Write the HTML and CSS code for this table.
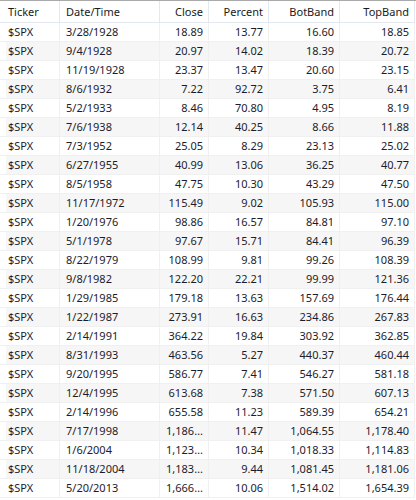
FILE: index.html
```html
<!DOCTYPE html>
<html>
<head>
<meta charset="utf-8">
<link rel="stylesheet" href="styles.css">
</head>
<body>
<div class="grid">
  <div class="row head">
    <div class="c l first">Ticker</div>
    <div class="c l">Date/Time</div>
    <div class="c r">Close</div>
    <div class="c r">Percent</div>
    <div class="c r">BotBand</div>
    <div class="c r">TopBand</div>
  </div>
  <div class="row"><div class="c l first">$SPX</div><div class="c l">3/28/1928</div><div class="c r">18.89</div><div class="c r">13.77</div><div class="c r">16.60</div><div class="c r">18.85</div></div>
  <div class="row alt"><div class="c l first">$SPX</div><div class="c l">9/4/1928</div><div class="c r">20.97</div><div class="c r">14.02</div><div class="c r">18.39</div><div class="c r">20.72</div></div>
  <div class="row"><div class="c l first">$SPX</div><div class="c l">11/19/1928</div><div class="c r">23.37</div><div class="c r">13.47</div><div class="c r">20.60</div><div class="c r">23.15</div></div>
  <div class="row alt"><div class="c l first">$SPX</div><div class="c l">8/6/1932</div><div class="c r">7.22</div><div class="c r">92.72</div><div class="c r">3.75</div><div class="c r">6.41</div></div>
  <div class="row"><div class="c l first">$SPX</div><div class="c l">5/2/1933</div><div class="c r">8.46</div><div class="c r">70.80</div><div class="c r">4.95</div><div class="c r">8.19</div></div>
  <div class="row alt"><div class="c l first">$SPX</div><div class="c l">7/6/1938</div><div class="c r">12.14</div><div class="c r">40.25</div><div class="c r">8.66</div><div class="c r">11.88</div></div>
  <div class="row"><div class="c l first">$SPX</div><div class="c l">7/3/1952</div><div class="c r">25.05</div><div class="c r">8.29</div><div class="c r">23.13</div><div class="c r">25.02</div></div>
  <div class="row alt"><div class="c l first">$SPX</div><div class="c l">6/27/1955</div><div class="c r">40.99</div><div class="c r">13.06</div><div class="c r">36.25</div><div class="c r">40.77</div></div>
  <div class="row"><div class="c l first">$SPX</div><div class="c l">8/5/1958</div><div class="c r">47.75</div><div class="c r">10.30</div><div class="c r">43.29</div><div class="c r">47.50</div></div>
  <div class="row alt"><div class="c l first">$SPX</div><div class="c l">11/17/1972</div><div class="c r">115.49</div><div class="c r">9.02</div><div class="c r">105.93</div><div class="c r">115.00</div></div>
  <div class="row"><div class="c l first">$SPX</div><div class="c l">1/20/1976</div><div class="c r">98.86</div><div class="c r">16.57</div><div class="c r">84.81</div><div class="c r">97.10</div></div>
  <div class="row alt"><div class="c l first">$SPX</div><div class="c l">5/1/1978</div><div class="c r">97.67</div><div class="c r">15.71</div><div class="c r">84.41</div><div class="c r">96.39</div></div>
  <div class="row"><div class="c l first">$SPX</div><div class="c l">8/22/1979</div><div class="c r">108.99</div><div class="c r">9.81</div><div class="c r">99.26</div><div class="c r">108.39</div></div>
  <div class="row alt"><div class="c l first">$SPX</div><div class="c l">9/8/1982</div><div class="c r">122.20</div><div class="c r">22.21</div><div class="c r">99.99</div><div class="c r">121.36</div></div>
  <div class="row"><div class="c l first">$SPX</div><div class="c l">1/29/1985</div><div class="c r">179.18</div><div class="c r">13.63</div><div class="c r">157.69</div><div class="c r">176.44</div></div>
  <div class="row alt"><div class="c l first">$SPX</div><div class="c l">1/22/1987</div><div class="c r">273.91</div><div class="c r">16.63</div><div class="c r">234.86</div><div class="c r">267.83</div></div>
  <div class="row"><div class="c l first">$SPX</div><div class="c l">2/14/1991</div><div class="c r">364.22</div><div class="c r">19.84</div><div class="c r">303.92</div><div class="c r">362.85</div></div>
  <div class="row alt"><div class="c l first">$SPX</div><div class="c l">8/31/1993</div><div class="c r">463.56</div><div class="c r">5.27</div><div class="c r">440.37</div><div class="c r">460.44</div></div>
  <div class="row"><div class="c l first">$SPX</div><div class="c l">9/20/1995</div><div class="c r">586.77</div><div class="c r">7.41</div><div class="c r">546.27</div><div class="c r">581.18</div></div>
  <div class="row alt"><div class="c l first">$SPX</div><div class="c l">12/4/1995</div><div class="c r">613.68</div><div class="c r">7.38</div><div class="c r">571.50</div><div class="c r">607.13</div></div>
  <div class="row"><div class="c l first">$SPX</div><div class="c l">2/14/1996</div><div class="c r">655.58</div><div class="c r">11.23</div><div class="c r">589.39</div><div class="c r">654.21</div></div>
  <div class="row alt"><div class="c l first">$SPX</div><div class="c l">7/17/1998</div><div class="c r">1,186.75</div><div class="c r">11.47</div><div class="c r">1,064.55</div><div class="c r">1,178.40</div></div>
  <div class="row"><div class="c l first">$SPX</div><div class="c l">1/6/2004</div><div class="c r">1,123.67</div><div class="c r">10.34</div><div class="c r">1,018.33</div><div class="c r">1,114.83</div></div>
  <div class="row alt"><div class="c l first">$SPX</div><div class="c l">11/18/2004</div><div class="c r">1,183.55</div><div class="c r">9.44</div><div class="c r">1,081.45</div><div class="c r">1,181.06</div></div>
  <div class="row"><div class="c l first">$SPX</div><div class="c l">5/20/2013</div><div class="c r">1,666.29</div><div class="c r">10.06</div><div class="c r">1,514.02</div><div class="c r">1,654.39</div></div>
</div>
</body>
</html>
```
FILE: styles.css
```css
html, body {
  margin: 0;
  padding: 0;
  background: #ffffff;
}
body {
  font-family: "Noto Sans", "Open Sans", sans-serif;
  font-size: 11px;
  color: #1c1c2c;
}
.grid {
  width: 416px;
  border-top: 1px solid #a9a9a9;
}
.row {
  display: grid;
  grid-template-columns: 60px 100px 49px 60px 71px 75px;
  height: 19px;
  border-bottom: 1px solid #f0f0f0;
  box-sizing: border-box;
  width: 415px;
}
.row.alt .c {
  background: #f6f6f6;
}
.row.alt .c.first {
  background: linear-gradient(to right, #ffffff 6px, #f6f6f6 6px);
}
.row.head {
  height: 22px;
  border-bottom: 1px solid #e3e8f0;
}
.head .c {
  border-right-color: #e3e8f0;
  color: #1a1a1a;
  line-height: 21px;
}
.c {
  box-sizing: border-box;
  border-right: 1px solid #f0f0f0;
  padding: 0 5px 0 6px;
  line-height: 18px;
  white-space: nowrap;
  overflow: hidden;
  text-overflow: ellipsis;
}
.c.first {
  padding-left: 8px;
}
.c.r {
  text-align: right;
}
.c.l {
  text-align: left;
}
```
